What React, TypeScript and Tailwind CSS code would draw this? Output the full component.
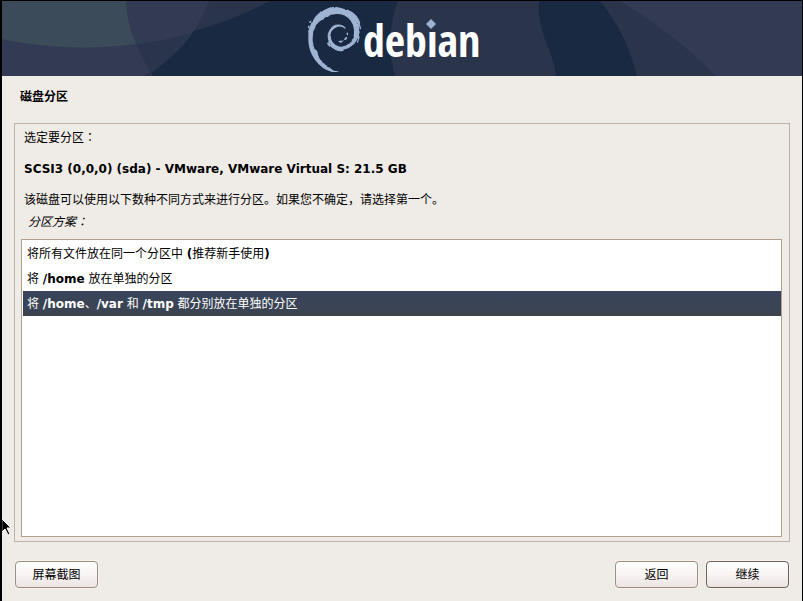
import { useState, type ReactNode } from "react";
import clsx from "clsx";
import { SiDebian } from "react-icons/si";

type Scheme = {
    id: string;
    label: ReactNode;
};

const schemes: Scheme[] = [
    {
        id: "atomic",
        label: <>将所有文件放在同一个分区中 <b>(</b>推荐新手使用<b>)</b></>
    },
    {
        id: "home",
        label: <>将 <b>/home</b> 放在单独的分区</>
    },
    {
        id: "multi",
        label: <>将 <b>/home</b>、<b>/var</b> 和 <b>/tmp</b> 都分别放在单独的分区</>
    }
];

// Full-width colon that sits in the middle of its cell
function Colon() {
    return <span className="font-['Noto_Sans_CJK_TC',sans-serif] leading-none">：</span>;
}

function Banner() {
    return (
        <header className="relative h-[75px] overflow-hidden bg-[#323b53]">
            <svg className="absolute top-0 left-0 h-[75px] w-[800px]" viewBox="0 0 800 75" aria-hidden="true">
                <path d="M0 0H720V75H0Z" fill="#1a2942" />
                <path d="M0 0H268C188 42 92 54 0 38Z" fill="#2a344b" />
                <path d="M0 0H207C196 31 173 57 143 75H0Z" fill="#323b53" />
                <path d="M0 0H124C125 16 128 30 134 43C90 49 42 47 0 38Z" fill="#3c4b59" />
                <path d="M134 43C153 41 172 37 189 32C178 48 165 61 149 72C143 62 138 53 134 43Z" fill="#2a344b" />
                <path d="M143 75L149 71L151 75Z" fill="#2a344b" />
                <path d="M396 0H537C534 31 552 50 554 75H393C386 50 387 24 396 0Z" fill="#2a344b" />
                <path d="M598 0H760V75H635C628 46 616 22 598 0Z" fill="#2a344b" />
                <path d="M618 0H800V75H714C687 48 655 22 618 0Z" fill="#323b53" />
            </svg>
            <div className="relative flex h-full w-[800px] items-center pt-[2px] pl-[300px]">
                <SiDebian className="size-[65px] text-[#9fb4d3] [stroke-width:0.4]" aria-hidden="true" />
                <div className="relative -ml-1">
                    <span className="block font-['Open_Sans_Condensed',sans-serif] text-[44px] leading-[52px] font-bold text-white">debian</span>
                    {/* Blue diamond in place of the dot */}
                    <svg className="absolute top-0 left-0 h-[52px] w-[116px]" viewBox="0 0 116 52" aria-hidden="true">
                        <path d="M63 4H75V18H63Z" fill="#2a344b" />
                        <path d="M68 5L73 10L68 15L63 10Z" fill="#9fb4d3" />
                    </svg>
                </div>
            </div>
        </header>
    );
}

function DialogButton({ children, focused }: { children: string; focused?: boolean }) {
    return (
        <button
            type="button"
            className={clsx(
                "h-[27px] w-[83px] rounded-[4px] border bg-linear-to-b from-white via-[#f8f4f3] to-[#ebe4e2] text-center shadow-[0_0_0_1px_#f6f3ef]",
                focused ? "border-[#6b6258]" : "border-[#9c8f80]"
            )}
        >
            {children}
        </button>
    );
}

export default function App() {
    const [selected, setSelected] = useState("multi");

    return (
        <div className="relative flex min-h-screen flex-col border-t border-r border-l-2 border-black bg-[#efebe6] font-['DejaVu_Sans','Noto_Sans_CJK_SC',sans-serif] text-[12px] leading-5 text-black">
            <Banner />

            <main className="flex flex-1 flex-col px-3 pt-[11px] pb-[13px]">
                <h1 className="h-5 px-[6px] font-bold">磁盘分区</h1>

                <section className="mt-4 flex flex-1 flex-col border border-[#c0b3a5] py-1 pr-[7px] pl-[6px]">
                    <div className="flex flex-col gap-[11px] px-[3px]">
                        <p className="h-5">选定要分区<Colon /></p>
                        <p className="h-5 font-bold">SCSI3 (0,0,0) (sda) - VMware, VMware Virtual S: 21.5 GB</p>
                        <p className="h-5">该磁盘可以使用以下数种不同方式来进行分区。如果您不确定，请选择第一个。</p>
                    </div>

                    <h2 id="scheme-label" className="mt-[2px] h-5 px-[7px] italic">分区方案<Colon /></h2>
                    <div
                        role="radiogroup"
                        aria-labelledby="scheme-label"
                        className="mt-[7px] flex-1 border border-[#b0a08e] bg-white py-px pl-px"
                    >
                        {schemes.map((scheme) => (
                            <label
                                key={scheme.id}
                                className={clsx(
                                    "relative block h-[25px] px-1 leading-[27px]",
                                    selected === scheme.id && "bg-linear-to-b from-[#38445c] to-[#3c4450] text-white"
                                )}
                            >
                                <input
                                    type="radio"
                                    name="scheme"
                                    className="sr-only"
                                    checked={selected === scheme.id}
                                    onChange={() => setSelected(scheme.id)}
                                />
                                {scheme.label}
                            </label>
                        ))}
                    </div>
                </section>

                <footer className="mt-[19px] flex gap-2 px-px">
                    <DialogButton>屏幕截图</DialogButton>
                    <div className="flex-1" />
                    <DialogButton>返回</DialogButton>
                    <DialogButton focused>继续</DialogButton>
                </footer>
            </main>

            {/* Mouse pointer */}
            <svg className="absolute top-[517px] left-0 h-[18px] w-[10px]" viewBox="0 0 10 18" aria-hidden="true">
                <path d="M0 1L9 10H5L8 16L6 17L3 11L0 14Z" fill="#000" stroke="#fff" strokeWidth="1" />
                <path d="M0 2V13" stroke="#000" />
            </svg>
        </div>
    );
}
